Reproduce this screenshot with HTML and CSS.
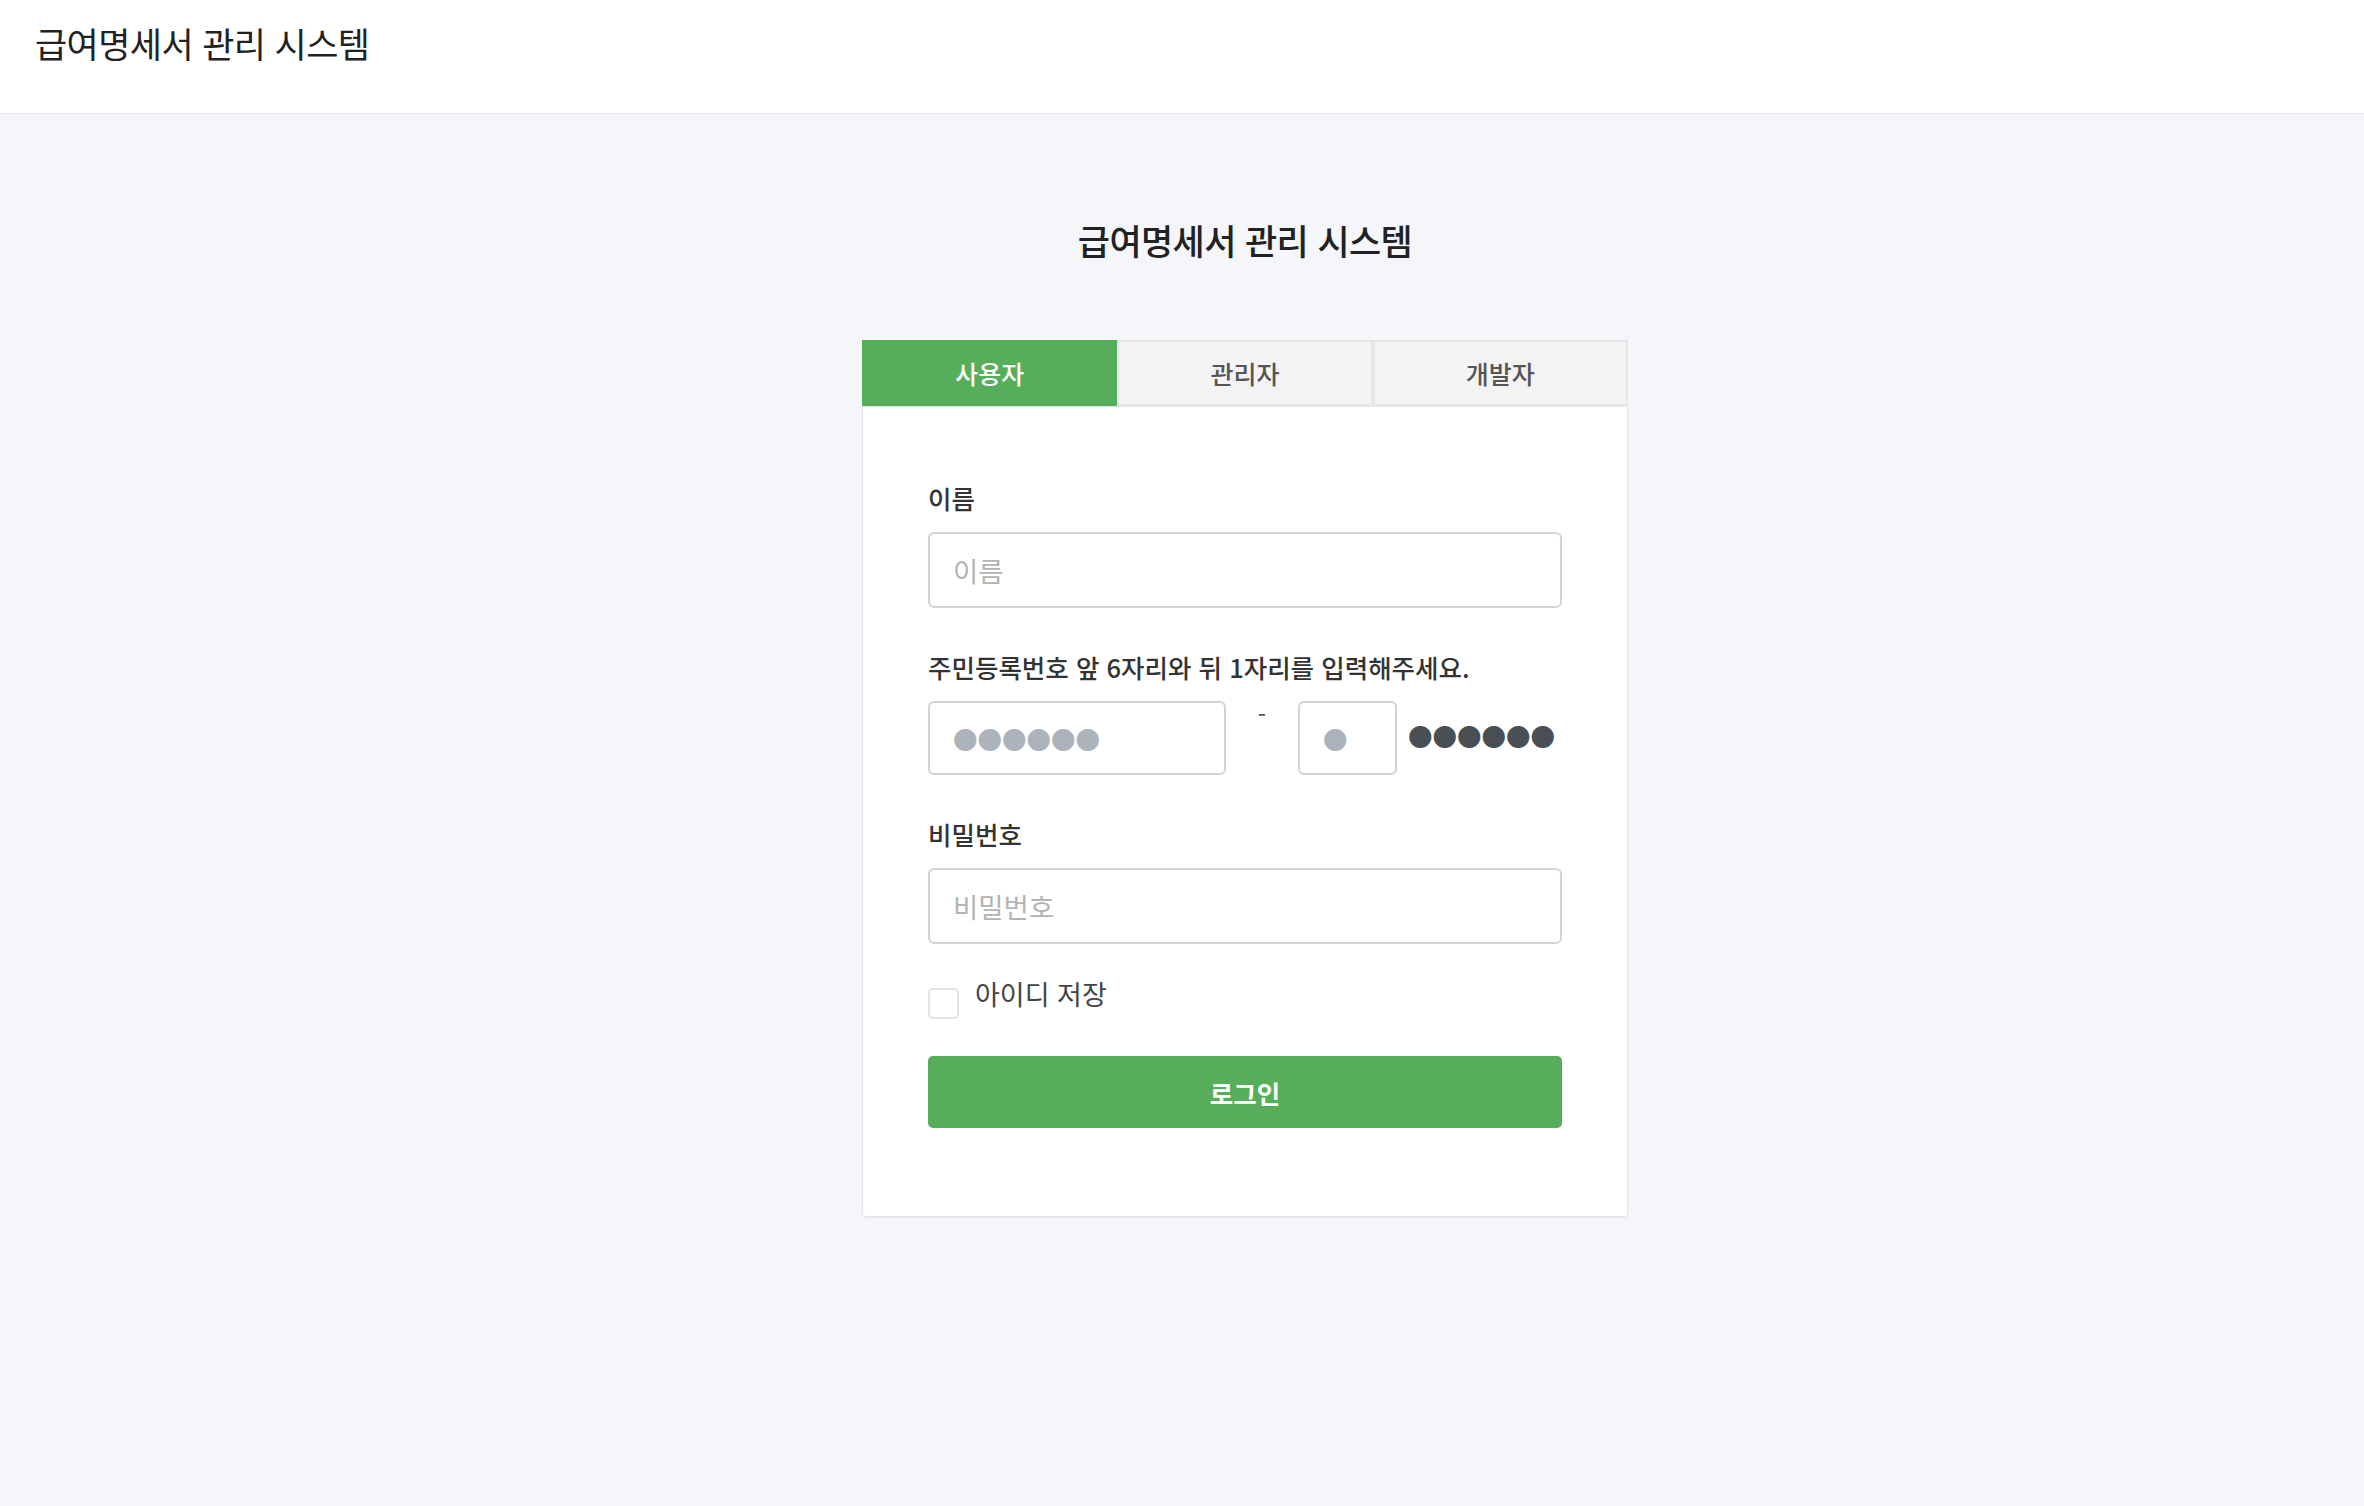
FILE: index.html
```html
<!DOCTYPE html>
<html lang="ko">
<head>
<meta charset="utf-8">
<title>급여명세서 관리 시스템</title>
<link rel="stylesheet" href="styles.css">
</head>
<body>
<header class="topbar">
  <h1 class="brand">급여명세서 관리 시스템</h1>
</header>
<main class="page">
  <h2 class="page-title">급여명세서 관리 시스템</h2>
  <div class="login">
    <div class="tabs">
      <button class="tab active" type="button">사용자</button>
      <button class="tab" type="button">관리자</button>
      <button class="tab" type="button">개발자</button>
    </div>
    <form class="card">
      <div class="field">
        <label class="label">이름</label>
        <input class="input" type="text" placeholder="이름">
      </div>
      <div class="field">
        <label class="label">주민등록번호 앞 6자리와 뒤 1자리를 입력해주세요.</label>
        <div class="rrn">
          <input class="input rrn-front" type="text" placeholder="●●●●●●">
          <span class="rrn-dash">-</span>
          <input class="input rrn-back" type="text" placeholder="●">
          <span class="rrn-mask">●●●●●●</span>
        </div>
      </div>
      <div class="field">
        <label class="label">비밀번호</label>
        <input class="input" type="password" placeholder="비밀번호">
      </div>
      <label class="remember">
        <input class="check" type="checkbox">
        <span class="remember-text">아이디 저장</span>
      </label>
      <button class="submit" type="button">로그인</button>
    </form>
  </div>
</main>
</body>
</html>
```
FILE: styles.css
```css
* { box-sizing: border-box; }
html, body { margin: 0; padding: 0; }
body {
  background: #f5f6fa;
  font-family: "Noto Sans CJK KR", "Noto Sans", sans-serif;
  color: #222;
  min-height: 1506px;
}
.topbar {
  height: 114px;
  background: #fff;
  border-bottom: 1px solid #e4e6ea;
  padding: 19px 0 0 35px;
}
.brand {
  margin: 0;
  font-size: 35px;
  line-height: 48px;
  font-weight: 400;
  letter-spacing: -0.6px;
  color: #222;
}
.page {
  display: flex;
  flex-direction: column;
  align-items: center;
  padding-left: 126px;
}
.page-title {
  margin: 102px 0 0;
  font-size: 35px;
  line-height: 48px;
  font-weight: 500;
  letter-spacing: -0.6px;
  color: #222;
}
.login {
  width: 766px;
  margin-top: 76px;
}
.tabs {
  display: grid;
  grid-template-columns: repeat(3, 1fr);
  height: 66px;
}
.tab {
  font-family: inherit;
  font-size: 25px;
  font-weight: 500;
  color: #555;
  background: #f3f3f3;
  border: 2px solid #e6e6e6;
  padding: 0;
  margin: 0;
  cursor: pointer;
}
.tab.active {
  background: #57ae5a;
  border-color: #57ae5a;
  color: #fff;
}
.card {
  background: #fff;
  border: 1px solid #e3e4e6;
  border-radius: 0 0 4px 4px;
  box-shadow: 0 1px 3px rgba(0,0,0,0.05);
  padding: 73px 65px 88px;
  display: flex;
  flex-direction: column;
}
.field {
  display: flex;
  flex-direction: column;
  margin-bottom: 41px;
}
.label {
  font-size: 25.5px;
  line-height: 36px;
  font-weight: 500;
  color: #333;
  margin-bottom: 16px;
}
.input {
  height: 76px;
  border: 2px solid #d3d3d3;
  border-radius: 6px;
  padding: 0 23px;
  font-family: inherit;
  font-size: 27.5px;
  color: #333;
  background: #fff;
  outline: none;
}
.input::placeholder { color: #b3b3b3; }
.rrn {
  display: flex;
  align-items: flex-start;
}
.rrn .input { height: 74px; }
.rrn-front { width: 298px; }
.rrn-front::placeholder, .rrn-back::placeholder {
  color: #adb3bb;
  font-size: 24.5px;
}
.rrn-dash {
  width: 72px;
  text-align: center;
  font-size: 24px;
  line-height: 26px;
  color: #555;
}
.rrn-back { width: 99px; }
.rrn-mask {
  margin-left: 11px;
  align-self: center;
  font-size: 24.5px;
  line-height: 36px;
  margin-top: -3px;
  color: #4a4e55;
}
.remember {
  display: flex;
  align-items: flex-start;
  margin-top: -6px;
  gap: 16px;
}
.check {
  appearance: none;
  -webkit-appearance: none;
  width: 31px;
  height: 31px;
  margin: 9px 0 0;
  border: 2px solid #dfe3e8;
  border-radius: 5px;
  background: #fff;
}
.remember-text {
  font-size: 27px;
  line-height: 36px;
  margin-top: -3px;
  margin-bottom: 3px;
  color: #444;
}
.submit {
  margin-top: 37px;
  height: 72px;
  border: none;
  border-radius: 5px;
  background: #57ae5a;
  color: #fff;
  font-family: inherit;
  font-size: 25.5px;
  font-weight: 700;
  cursor: pointer;
}
```
